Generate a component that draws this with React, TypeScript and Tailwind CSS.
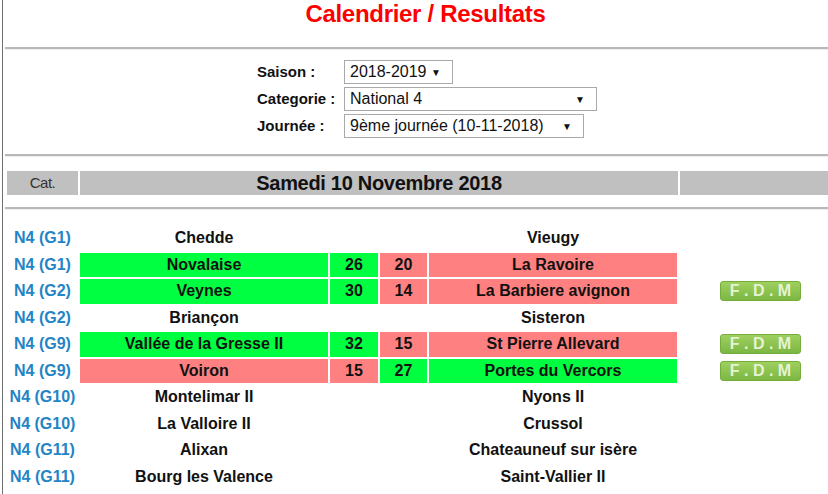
import React from 'react';

type Match = {
  cat: string;
  home: string;
  away: string;
  sh?: number;
  sa?: number;
  fdm?: boolean;
};

const matches: Match[] = [
  { cat: 'N4 (G1)', home: 'Chedde', away: 'Vieugy' },
  { cat: 'N4 (G1)', home: 'Novalaise', away: 'La Ravoire', sh: 26, sa: 20 },
  { cat: 'N4 (G2)', home: 'Veynes', away: 'La Barbiere avignon', sh: 30, sa: 14, fdm: true },
  { cat: 'N4 (G2)', home: 'Briançon', away: 'Sisteron' },
  { cat: 'N4 (G9)', home: 'Vallée de la Gresse II', away: 'St Pierre Allevard', sh: 32, sa: 15, fdm: true },
  { cat: 'N4 (G9)', home: 'Voiron', away: 'Portes du Vercors', sh: 15, sa: 27, fdm: true },
  { cat: 'N4 (G10)', home: 'Montelimar II', away: 'Nyons II' },
  { cat: 'N4 (G10)', home: 'La Valloire II', away: 'Crussol' },
  { cat: 'N4 (G11)', home: 'Alixan', away: 'Chateauneuf sur isère' },
  { cat: 'N4 (G11)', home: 'Bourg les Valence', away: 'Saint-Vallier II' },
];

const WIN = 'bg-[#00ff40]';
const LOSS = 'bg-[#ff8080]';

const Hr = () => (
  <div className="border-t-2 border-[#b8b8b8] border-b border-b-[#eeeeee]" />
);

const FakeSelect: React.FC<{ value: string; width: string }> = ({ value, width }) => (
  <div className={`${width} h-[24px] border border-[#a9a9a9] bg-white flex items-center justify-between pl-[5px] pr-[11px] text-[16px] text-[#111]`}>
    <span>{value}</span>
    <span className="text-[10px]">▼</span>
  </div>
);

const App: React.FC = () => {
  return (
    <div className="w-[828px] h-[494px] overflow-hidden bg-white font-['Liberation_Sans',Arial,sans-serif]">
      <div className="ml-[2px] w-[844px] h-[494px] border-l border-[#707070] pl-[2px]">
        <h1 className="h-[47px] leading-[28px] text-center text-[24px] font-bold text-[#ff0000] tracking-[-0.3px]">
          Calendrier / Resultats
        </h1>
        <Hr />

        <div className="ml-[251px] mt-[10px] flex flex-col gap-[3px]">
          {[
            { label: 'Saison :', value: '2018-2019', w: 'w-[109px]' },
            { label: 'Categorie :', value: 'National 4', w: 'w-[253px]' },
            { label: 'Journée :', value: '9ème journée (10-11-2018)', w: 'w-[240px]' },
          ].map((r) => (
            <div key={r.label} className="flex items-center">
              <span className="w-[88px] text-[15px] font-bold text-[#111] pl-[1px]">{r.label}</span>
              <FakeSelect value={r.value} width={r.w} />
            </div>
          ))}
        </div>

        <div className="mt-[16px]">
          <Hr />
        </div>

        <table className="mt-[12px] border-separate border-spacing-[2px]">
          <tbody>
            <tr className="h-[24px] bg-[#c0c0c0] leading-[22px]">
              <td className="w-[71px] text-center text-[#333] text-[15px] tracking-[-0.5px]">Cat.</td>
              <td className="w-[598px] text-center font-bold text-[20px] text-[#111] tracking-[-0.3px]">
                Samedi 10 Novembre 2018
              </td>
              <td className="w-[162px]" />
            </tr>
          </tbody>
        </table>

        <div className="mt-[10px]">
          <Hr />
        </div>

        <table className="mt-[14px] border-separate border-spacing-[2px] text-[16px] font-bold text-[#111]">
          <tbody>
            {matches.map((m, i) => {
              const played = m.sh !== undefined && m.sa !== undefined;
              const homeWin = played && (m.sh as number) > (m.sa as number);
              const hc = played ? (homeWin ? WIN : LOSS) : '';
              const ac = played ? (homeWin ? LOSS : WIN) : '';
              return (
                <tr key={i} className="h-[24.5px] leading-[20px]">
                  <td className="w-[71px] text-center text-[#2384c6] whitespace-nowrap">{m.cat}</td>
                  <td className={`w-[248px] text-center ${hc}`}>{m.home}</td>
                  <td className={`w-[48px] text-center ${hc}`}>{m.sh ?? ''}</td>
                  <td className={`w-[47px] text-center ${ac}`}>{m.sa ?? ''}</td>
                  <td className={`w-[248px] text-center ${ac}`}>{m.away}</td>
                  <td className="w-[162px] pl-[41px]">
                    {m.fdm && (
                      <div className="w-[81px] h-[20px] rounded-[3px] border border-[#74ad3d] bg-gradient-to-b from-[#9fd05e] to-[#7cb744] flex items-center justify-center text-[16px] font-bold text-[#e4f4d2]">
                        F . D . M
                      </div>
                    )}
                  </td>
                </tr>
              );
            })}
          </tbody>
        </table>
      </div>
    </div>
  );
};

export default App;
